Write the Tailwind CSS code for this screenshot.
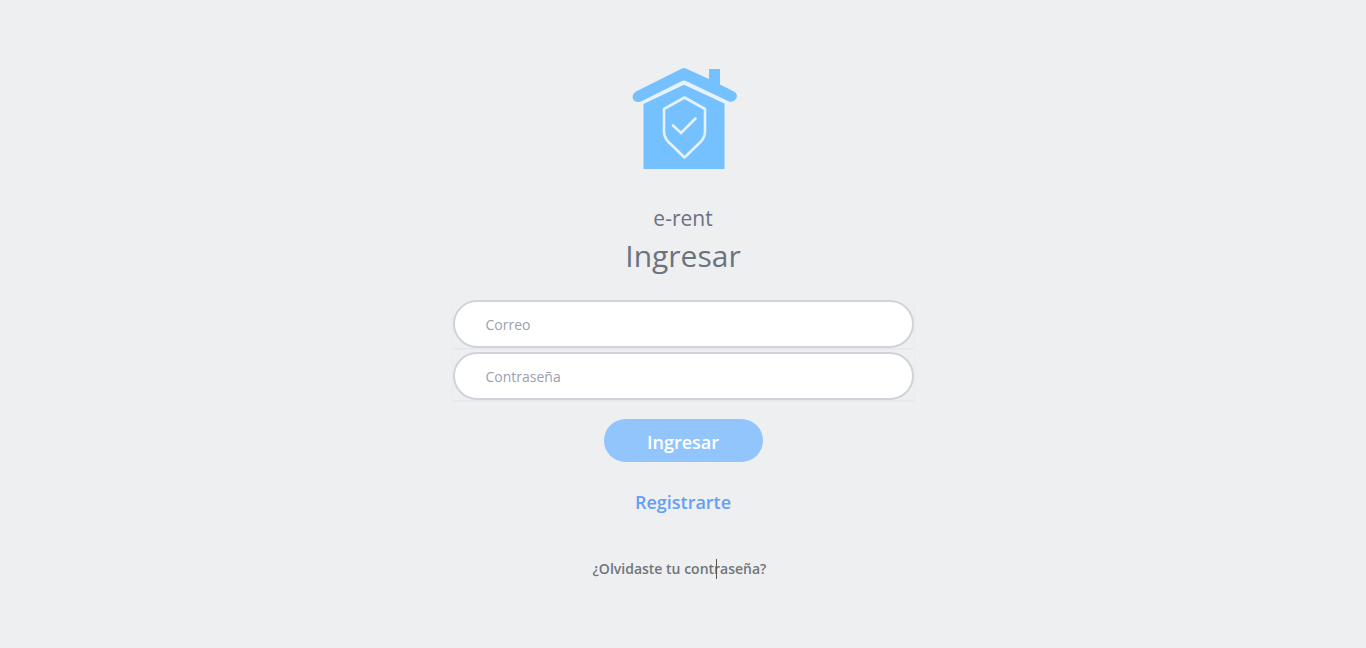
<!DOCTYPE html>
<html lang="es">
<head>
<meta charset="utf-8">
<meta name="viewport" content="width=device-width, initial-scale=1">
<title>e-rent</title>
<script src="https://cdn.jsdelivr.net/npm/@tailwindcss/browser@4"></script>
</head>
<body class="min-h-screen bg-[#edeff1] font-['Open_Sans','Noto_Sans',sans-serif] text-[#6b7280]">
<main class="flex flex-col items-center px-4 pt-15 pb-8">
  <svg class="h-30 w-30" viewBox="0 0 120 120" fill="none" role="img" aria-label="e-rent">
    <path d="M20.500 109V43L61 24.500 101.500 43V109Z" fill="#75c1ff"/>
    <path d="M18 43 61 22.500 105 43" stroke="#e6f3fd" stroke-width="4"/>
    <path d="M13 31.500 57 9.500Q61 6.500 65 9.500L86 19V9H97V24.500L111 31.500Q115 34 113.500 38 111 42.500 106 41.500L63 21Q61 20 59 21L18 41.500Q12 43 10 39 8.500 34 13 31.500Z" fill="#75c1ff"/>
    <path d="M61.500 37.500 82 49V71Q82 77 78 81.500L61.500 97.500 45 81.500Q41 77 41 71V49Z" stroke="#e4f2fd" stroke-width="2.600" stroke-linejoin="round"/>
    <path d="M50 65.500 58 73 72.500 58.500" stroke="#e4f2fd" stroke-width="2.600" stroke-linecap="round"/>
  </svg>
  <h2 class="mt-6 text-[21px] leading-7">e-rent</h2>
  <h1 class="mt-1 text-3xl leading-10">Ingresar</h1>
  <form class="mt-6 flex w-full max-w-[461px] flex-col items-center">
    <div class="flex w-full flex-col gap-1">
      <div class="shadow-xs"><input type="email" aria-label="Correo" placeholder="Correo" class="block h-12 w-full rounded-full border-2 border-[#d1d3db] bg-white px-[31px] text-sm placeholder:text-[#9ca0ad] focus:outline-none"></div>
      <div class="shadow-xs"><input type="password" aria-label="Contraseña" placeholder="Contraseña" class="block h-12 w-full rounded-full border-2 border-[#d1d3db] bg-white px-[31px] text-sm placeholder:text-[#9ca0ad] focus:outline-none"></div>
    </div>
    <button type="submit" class="mt-[19px] h-[43px] w-[159px] rounded-full bg-[#93c5fd] pt-[2px] text-lg leading-7 font-semibold text-white">Ingresar</button>
  </form>
  <a href="#registro" class="mt-6 text-lg leading-8 font-semibold text-[#649ff4]">Registrarte</a>
  <a href="#recuperar" class="relative mt-[41px] mr-[7px] text-sm leading-5 font-semibold text-[#70757c]">¿Olvidaste tu contraseña?<span class="absolute top-0 left-[123px] h-5 w-px bg-[#555]"></span></a>
</main>
</body>
</html>
